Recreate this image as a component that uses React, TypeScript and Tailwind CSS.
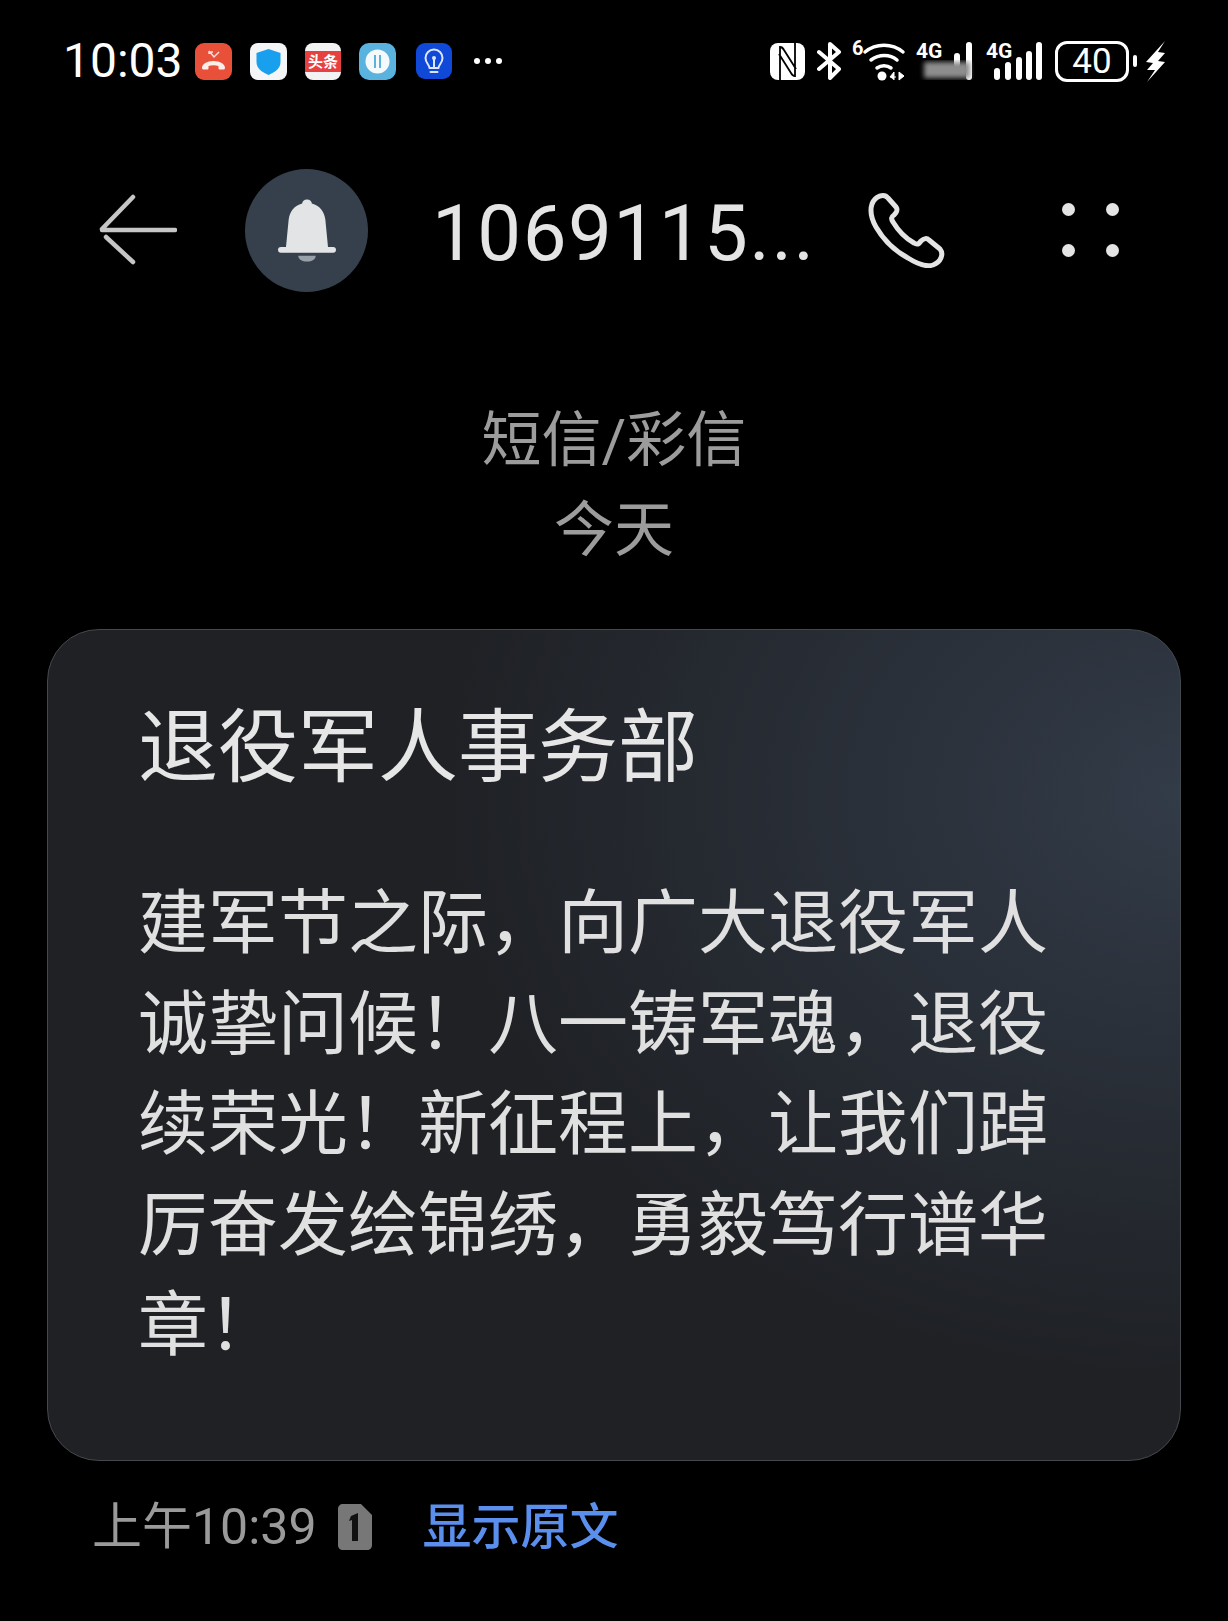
const CJK = "font-['Roboto','Noto_Sans_CJK_SC',sans-serif]";

const BODY_LINES = [
  "建军节之际，向广大退役军人",
  "诚挚问候！八一铸军魂，退役",
  "续荣光！新征程上，让我们踔",
  "厉奋发绘锦绣，勇毅笃行谱华",
  "章！",
];

function MissedCallIcon() {
  return (
    <svg width="37" height="37" viewBox="0 0 37 37">
      <rect width="37" height="37" rx="9" fill="#e9503a" />
      <path d="M14 8l5 6 5-5M15 9h3M14 8v3" fill="none" stroke="#f9ddd6" strokeWidth="1.500" />
      <path d="M7 25c0-4 5-7 11.500-7S30 21 30 25c0 1-1 1.500-2 1.500h-3c-1 0-1.500-.5-1.500-1.500v-2c-3-1-7-1-10 0v2c0 1-.5 1.500-1.500 1.500H9c-1 0-2-.5-2-1.500z" fill="#fbeee9" />
    </svg>
  );
}

function ShieldIcon() {
  return (
    <svg width="37" height="37" viewBox="0 0 37 37">
      <rect width="37" height="37" rx="8" fill="#f3f5f6" />
      <path d="M18.500 6l12 4v9c0 6-5 10-12 13-7-3-12-7-12-13v-9z" fill="#18a0ef" />
    </svg>
  );
}

function ToutiaoIcon() {
  return (
    <svg width="36" height="37" viewBox="0 0 36 37">
      <rect width="36" height="37" rx="8" fill="#f3f3f3" />
      <rect y="8" width="36" height="21" fill="#e6403f" />
      <text x="18" y="24" textAnchor="middle" fontSize="15" fontWeight="700" fill="#fff" fontFamily="'Noto Sans CJK SC',sans-serif">头条</text>
    </svg>
  );
}

function TransferIcon() {
  return (
    <svg width="37" height="37" viewBox="0 0 37 37">
      <rect width="37" height="37" rx="10" fill="#5ab2df" />
      <circle cx="18.500" cy="18.500" r="12" fill="#f4f9fc" />
      <path d="M16 12v13M21 12v13" stroke="#5ab2df" strokeWidth="2" />
    </svg>
  );
}

function BulbIcon() {
  return (
    <svg width="36" height="36" viewBox="0 0 36 36">
      <rect width="36" height="36" rx="9" fill="#1048d8" />
      <path d="M13.500 25c0-3-4-5-4-10a8.500 8.500 0 0 1 17 0c0 5-4 7-4 10z" fill="none" stroke="#dbe6ff" strokeWidth="2" strokeLinejoin="round" />
      <path d="M14.500 29h7" stroke="#dbe6ff" strokeWidth="2" strokeLinecap="round" />
      <path d="M18 25v-9" stroke="#dbe6ff" strokeWidth="2" />
      <circle cx="18" cy="15" r="2" fill="#dbe6ff" />
    </svg>
  );
}

function NfcIcon() {
  return (
    <svg width="35" height="37" viewBox="0 0 35 37">
      <rect width="35" height="37" rx="8" fill="#fff" />
      <path d="M10 37V4c2 0 3 1 4 3l12 19M25 0v33c-2 0-3-1-4-3L9 11" fill="none" stroke="#000" strokeWidth="1.800" />
    </svg>
  );
}

function BluetoothIcon() {
  return (
    <svg width="25" height="38" viewBox="0 0 25 38">
      <path d="M2 10l20 17-9 9V2l9 8-20 17" fill="none" stroke="#fff" strokeWidth="4" strokeLinejoin="round" strokeLinecap="round" />
    </svg>
  );
}

function WifiIcon() {
  return (
    <svg width="56" height="54" viewBox="0 -6 56 54">
      <text x="0" y="15" fontSize="20" fontWeight="700" fill="#fff" fontFamily="Roboto,sans-serif">6</text>
      <path d="M13 12c11-9 27-9 38 0" fill="none" stroke="#fff" strokeWidth="3.500" strokeLinecap="round" />
      <path d="M19 20c8-6 19-6 26 0" fill="none" stroke="#fff" strokeWidth="3.500" strokeLinecap="round" />
      <path d="M25 28c4-3 10-3 14 0" fill="none" stroke="#fff" strokeWidth="3.500" strokeLinecap="round" />
      <circle cx="30" cy="36" r="4.500" fill="#fff" />
      <path d="M38 37l4-5v8M38 37h6M47 32l5 4-5 4z" fill="#fff" stroke="#fff" strokeWidth="1" />
    </svg>
  );
}

function SignalBlurred() {
  return (
    <svg width="58" height="50" viewBox="0 -4 58 50">
      <defs>
        <filter id="smudge">
          <feGaussianBlur stdDeviation="2.500" />
        </filter>
      </defs>
      <text x="0" y="18" fontSize="21" fontWeight="700" fill="#fff" fontFamily="Roboto,sans-serif">4G</text>
      <rect x="38" y="13" width="6" height="14" rx="3" fill="#fff" />
      <rect x="50" y="2" width="6" height="38" rx="3" fill="#fff" />
      <rect x="8" y="22" width="46" height="16" fill="#8d8d8d" filter="url(#smudge)" />
    </svg>
  );
}

function SignalFull() {
  return (
    <svg width="56" height="50" viewBox="0 -4 56 50">
      <text x="0" y="18" fontSize="21" fontWeight="700" fill="#fff" fontFamily="Roboto,sans-serif">4G</text>
      <rect x="8" y="28" width="6" height="12" rx="3" fill="#fff" />
      <rect x="19" y="22" width="6" height="18" rx="3" fill="#fff" />
      <rect x="30" y="17" width="6" height="23" rx="3" fill="#fff" />
      <rect x="40" y="11" width="6" height="29" rx="3" fill="#fff" />
      <rect x="50" y="2" width="6" height="38" rx="3" fill="#fff" />
    </svg>
  );
}

function BoltIcon() {
  return (
    <svg width="22" height="41" viewBox="0 0 20 41">
      <path d="M20 0L1 21l7 1-6 7 8 0-8 12 18-20-7-1 7-8-7-1z" fill="#fff" />
    </svg>
  );
}

function StatusBar() {
  return (
    <div className="flex h-[122px] items-center pl-[63px] pr-[62px] text-white">
      <span className="w-[132px] font-['Roboto',sans-serif] text-[48px] leading-none">10:03</span>
      <div className="flex items-center gap-[18px]">
        <MissedCallIcon />
        <ShieldIcon />
        <ToutiaoIcon />
        <TransferIcon />
        <div className="ml-[2px]"><BulbIcon /></div>
      </div>
      <div className="ml-[22px] flex gap-[5px]">
        <span className="h-[6px] w-[6px] rounded-full bg-white" />
        <span className="h-[6px] w-[6px] rounded-full bg-white" />
        <span className="h-[6px] w-[6px] rounded-full bg-white" />
      </div>
      <div className="ml-auto flex items-center">
        <NfcIcon />
        <div className="ml-[12px]"><BluetoothIcon /></div>
        <div className="ml-[10px]"><WifiIcon /></div>
        <div className="ml-[8px]"><SignalBlurred /></div>
        <div className="ml-[12px]"><SignalFull /></div>
        <div className="ml-[13px] flex h-[41px] w-[74px] items-center justify-center rounded-[12px] border-[3px] border-white font-['Roboto',sans-serif] text-[35px] leading-none">
          40
        </div>
        <span className="ml-[4px] h-[12px] w-[4px] rounded-full bg-white" />
        <div className="ml-[7px]"><BoltIcon /></div>
      </div>
    </div>
  );
}

function Header() {
  return (
    <div className="flex h-[216px] items-center pl-[99px] text-[#e4e4e4]">
      <svg width="78" height="72" viewBox="0 0 78 72" fill="none" stroke="#c6c6c6" strokeWidth="4.500" strokeLinecap="round" strokeLinejoin="round">
        <path d="M3 36h73M34 3L3 35M7 43l27 25" />
      </svg>
      <div className="ml-[68px] flex h-[123px] w-[123px] items-center justify-center rounded-full bg-[#36404c]">
        <svg width="58" height="63" viewBox="0 0 60 64">
          <path d="M30 0c3 0 5 2 5 4 8 2 13 8 14 17l3 31H8l3-31C12 12 17 6 25 4c0-2 2-4 5-4z" fill="#e3e4e6" />
          <rect x="0" y="49" width="60" height="6" rx="3" fill="#e3e4e6" />
          <path d="M21 58h18c0 4-4 6-9 6s-9-2-9-6z" fill="#98a0aa" />
        </svg>
      </div>
      <span className="ml-[64px] mt-[8px] w-[400px] font-['Roboto',sans-serif] text-[78px] leading-none tracking-[1.500px]">1069115...</span>
      <svg className="ml-[36px]" width="78" height="76" viewBox="0 0 78 76" fill="none" stroke="#e4e4e4" strokeWidth="5" strokeLinejoin="round">
        <path d="M4 12c3-8 12-11 16-6l8 9c2 3 1 5-2 8-3 2-3 4-1 7 6 10 12 16 21 21 3 2 5 1 7-2 3-3 6-3 8-1l11 9c4 5 1 13-7 16-6 2-14 0-25-7C27 59 15 47 8 35 3 26 2 18 4 12z" />
      </svg>
      <div className="ml-[116px] grid grid-cols-2 gap-x-[31px] gap-y-[28px]">
        <span className="h-[13px] w-[13px] rounded-full bg-[#e4e4e4]" />
        <span className="h-[13px] w-[13px] rounded-full bg-[#e4e4e4]" />
        <span className="h-[13px] w-[13px] rounded-full bg-[#e4e4e4]" />
        <span className="h-[13px] w-[13px] rounded-full bg-[#e4e4e4]" />
      </div>
    </div>
  );
}

function MessageCard() {
  return (
    <div className="mx-[47px] mt-[53px] h-[832px] rounded-[52px] border border-[#45484c] bg-[radial-gradient(ellipse_65%_70%_at_100%_20%,#323b48_0%,#1f2125_100%)] pl-[93px] pt-[70px]">
      <h2 className="-ml-[3px] text-[80px] font-normal leading-[1.2] text-[#e6e6e6]">退役军人事务部</h2>
      <div className="-ml-[3px] mt-[78px] text-[70px] leading-[100.500px] text-[#e0e0e0]">
        {BODY_LINES.map((line) => (
          <p key={line} className="whitespace-nowrap">{line}</p>
        ))}
      </div>
    </div>
  );
}

function Footer() {
  return (
    <div className="ml-[92px] mt-[41px] flex items-center">
      <span className="text-[50px] leading-none text-[#9a9a9a]">上午10:39</span>
      <svg className="ml-[21px]" width="34" height="46" viewBox="0 0 34 46">
        <path d="M5 0h18l11 11v30c0 3-2 5-5 5H5c-3 0-5-2-5-5V5c0-3 2-5 5-5z" fill="#777" />
        <path d="M13 12l7-3v28h-6V16l-3 1z" fill="#111" />
      </svg>
      <span className="ml-[51px] text-[49px] font-medium leading-none text-[#5b8fee]">显示原文</span>
    </div>
  );
}

export default function App() {
  return (
    <div className={`h-[1621px] w-[1228px] overflow-hidden bg-black ${CJK}`}>
      <StatusBar />
      <Header />
      <div className="mt-[58px] flex flex-col items-center text-[60px] leading-[90px] text-[#9c9c9c]">
        <p>短信/彩信</p>
        <p>今天</p>
      </div>
      <MessageCard />
      <Footer />
    </div>
  );
}
